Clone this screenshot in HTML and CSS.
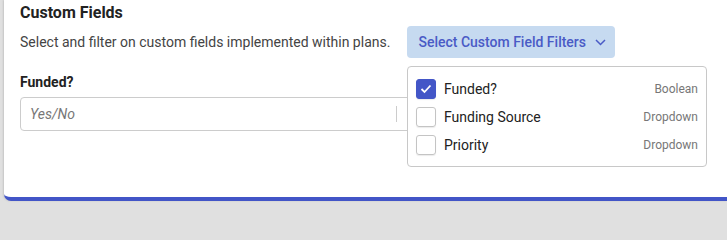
FILE: index.html
```html
<!DOCTYPE html>
<html>
<head>
<meta charset="utf-8">
<link rel="stylesheet" href="styles.css">
</head>
<body>
<div class="card">
  <h2 class="title">Custom Fields</h2>
  <div class="intro">
    <p class="desc">Select and filter on custom fields implemented within plans.</p>
    <button class="filter-btn">Select Custom Field Filters
      <svg class="chev" width="11" height="7" viewBox="0 0 11 7"><polyline points="1,1 5.5,5.5 10,1" fill="none" stroke="#4a5bc6" stroke-width="1.5"/></svg>
    </button>
  </div>
  <div class="field">
    <label class="label">Funded?</label>
    <div class="select">
      <span class="placeholder">Yes/No</span>
      <span class="sep"></span>
    </div>
  </div>
  <div class="menu">
    <div class="opt">
      <span class="box checked"><svg width="12" height="10" viewBox="0 0 12 10"><polyline points="1.5,5 4.5,8 10.5,1.5" fill="none" stroke="#fff" stroke-width="1.8"/></svg></span>
      <span class="name">Funded?</span><span class="type">Boolean</span>
    </div>
    <div class="opt">
      <span class="box"></span>
      <span class="name">Funding Source</span><span class="type">Dropdown</span>
    </div>
    <div class="opt">
      <span class="box"></span>
      <span class="name">Priority</span><span class="type">Dropdown</span>
    </div>
  </div>
</div>
</body>
</html>
```
FILE: styles.css
```css
html, body {
  margin: 0;
  padding: 0;
  background: #e0e0e0;
  font-family: Roboto, "Liberation Sans", sans-serif;
}
body {
  height: 206px;
  overflow: hidden;
}
.card {
  position: relative;
  margin-left: 4px;
  height: 201px;
  box-sizing: border-box;
  background: #fff;
  border-bottom: 4px solid #4255c7;
  border-bottom-left-radius: 7px;
  padding: 3px 16px 0;
  box-shadow: -1px 0 2px rgba(0,0,0,0.12);
}
.title {
  margin: 0;
  font-size: 16px;
  line-height: 20px;
  font-weight: 700;
  color: #222;
}
.intro {
  display: flex;
  align-items: center;
  gap: 17px;
  margin-top: 3px;
}
.desc {
  margin: 0;
  font-size: 14px;
  line-height: 20px;
  color: #444;
}
.filter-btn {
  display: flex;
  align-items: center;
  gap: 9px;
  height: 32px;
  padding: 0 9px 0 11px;
  border: none;
  border-radius: 4px;
  background: #c6daf0;
  color: #4a5bc6;
  font-family: Roboto, "Liberation Sans", sans-serif;
  font-size: 14px;
  font-weight: 500;
}
.field {
  margin-top: 14px;
  width: 414px;
}
.label {
  display: block;
  font-size: 14px;
  line-height: 20px;
  font-weight: 700;
  color: #222;
}
.select {
  margin-top: 5px;
  height: 34px;
  box-sizing: border-box;
  border: 1px solid #cccccc;
  border-radius: 4px;
  display: flex;
  align-items: center;
  padding-left: 9px;
}
.placeholder {
  flex: 1;
  font-size: 14px;
  font-style: italic;
  color: #777;
}
.sep {
  width: 1px;
  height: 16px;
  background: #cccccc;
  margin-right: 36px;
}
.menu {
  position: absolute;
  left: 403px;
  top: 66px;
  width: 300px;
  box-sizing: border-box;
  background: #fff;
  border: 1px solid #c8c8c8;
  border-radius: 4px;
  padding: 8px 8px 7px 8px;
}
.opt {
  display: flex;
  align-items: center;
  height: 28px;
}
.box {
  width: 20px;
  height: 20px;
  box-sizing: border-box;
  border: 1px solid #c4c4c4;
  border-radius: 3px;
  box-shadow: 0 1px 1px rgba(0,0,0,0.08);
  display: flex;
  align-items: center;
  justify-content: center;
}
.box.checked {
  background: #4356c7;
  border-color: #4356c7;
}
.name {
  flex: 1;
  margin-left: 8px;
  font-size: 14px;
  color: #222;
}
.type {
  font-size: 12px;
  color: #777;
}
```
